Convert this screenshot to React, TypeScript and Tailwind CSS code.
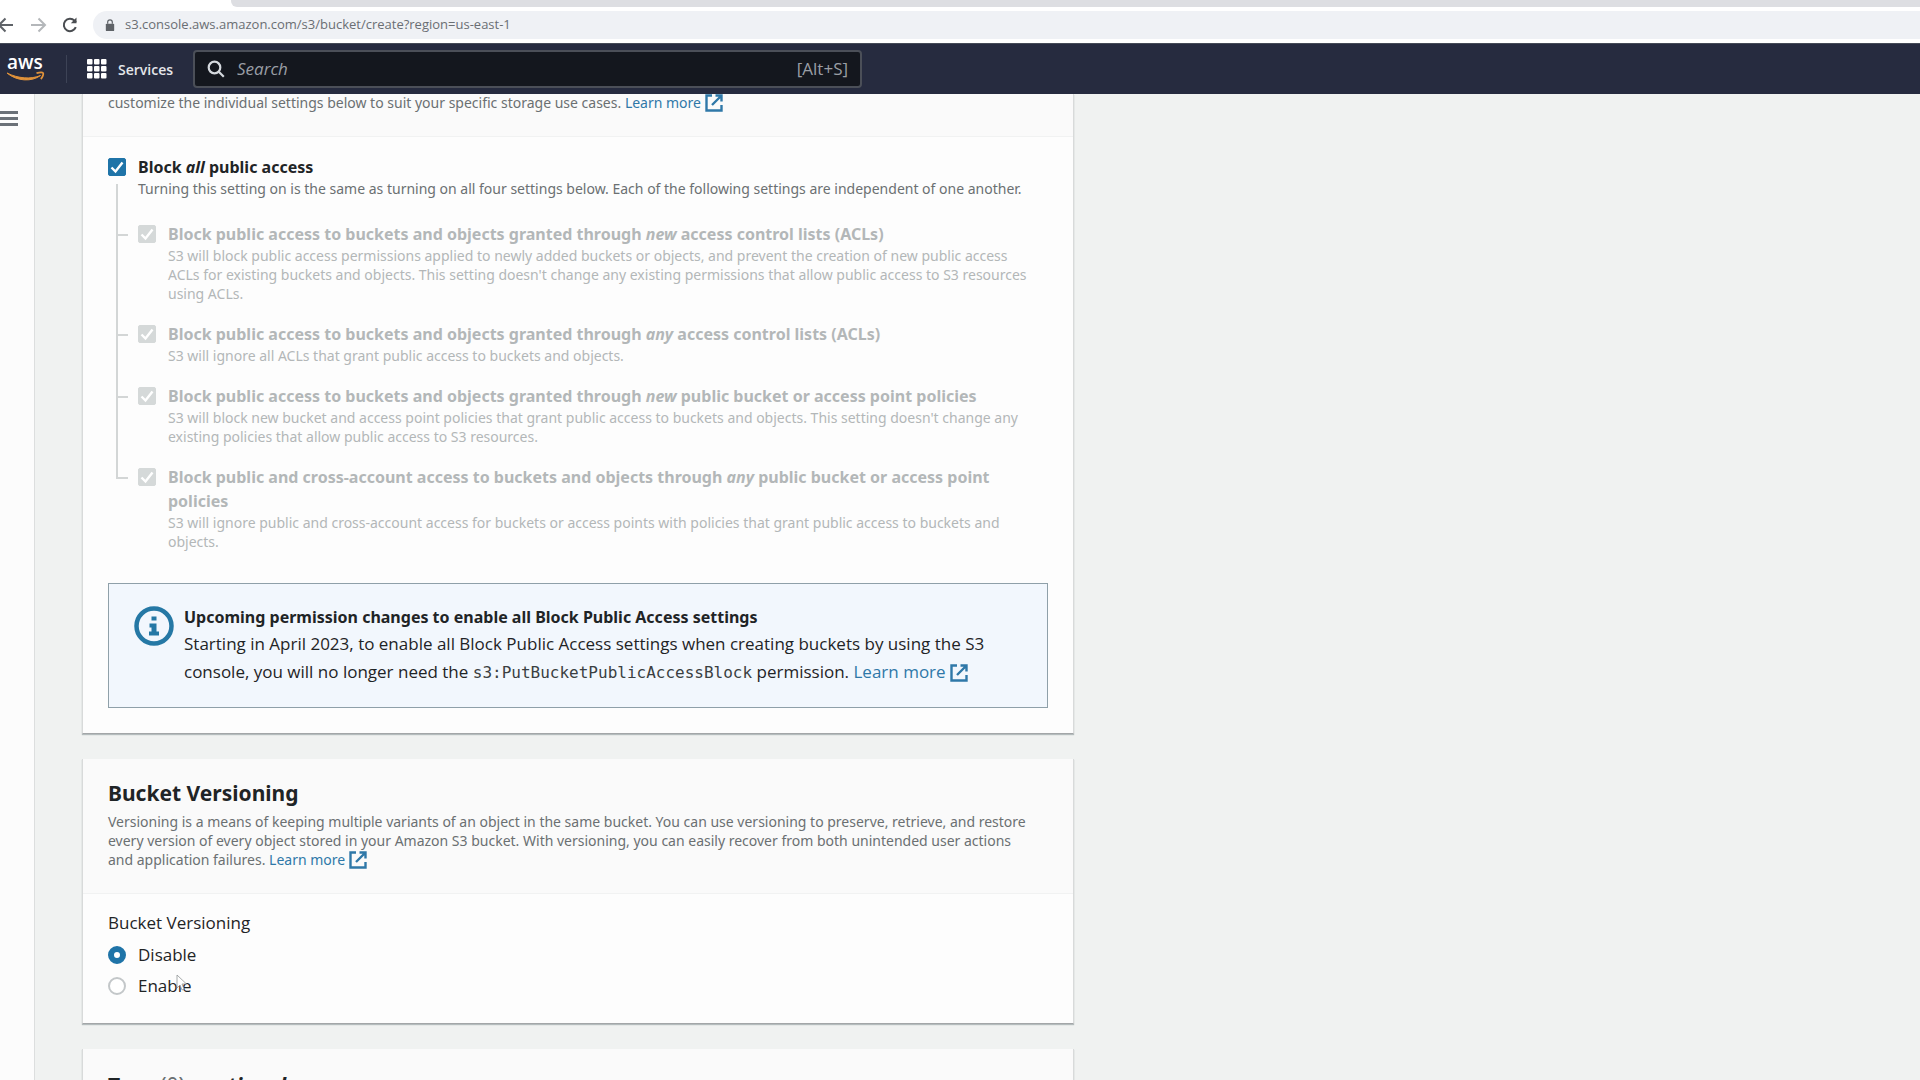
import React, { useState } from 'react';

interface AccessSetting {
  id: string;
  title: React.ReactNode;
  description: string;
}

const ACCESS_SETTINGS: AccessSetting[] = [
  {
    id: 'new-acls',
    title: <>Block public access to buckets and objects granted through <em>new</em> access control lists (ACLs)</>,
    description:
      "S3 will block public access permissions applied to newly added buckets or objects, and prevent the creation of new public access ACLs for existing buckets and objects. This setting doesn't change any existing permissions that allow public access to S3 resources using ACLs.",
  },
  {
    id: 'any-acls',
    title: <>Block public access to buckets and objects granted through <em>any</em> access control lists (ACLs)</>,
    description: 'S3 will ignore all ACLs that grant public access to buckets and objects.',
  },
  {
    id: 'new-policies',
    title: <>Block public access to buckets and objects granted through <em>new</em> public bucket or access point policies</>,
    description:
      "S3 will block new bucket and access point policies that grant public access to buckets and objects. This setting doesn't change any existing policies that allow public access to S3 resources.",
  },
  {
    id: 'any-policies',
    title: <>Block public and cross-account access to buckets and objects through <em>any</em> public bucket or access point policies</>,
    description:
      'S3 will ignore public and cross-account access for buckets or access points with policies that grant public access to buckets and objects.',
  },
];

const ExternalIcon = () => (
  <svg viewBox="0 0 18 18" className="inline-block h-[18px] w-[18px] align-[-4px]" fill="none" stroke="currentColor" strokeWidth="2.4" aria-hidden="true">
    <path d="M7 1.500H1.500v15h15V11" />
    <path d="M10.500 1.500h6v6M16 2 7 11" />
  </svg>
);

const LearnMore = () => (
  <a href="#learn-more" className="whitespace-nowrap text-[#2f78a8]">
    Learn more <ExternalIcon />
  </a>
);

const AwsLogo = () => (
  <svg viewBox="0 0 40 36" className="h-9 w-10" aria-label="aws">
    <text x="0" y="18" fill="#fff" fontSize="19" fontFamily="Open Sans, sans-serif" fontWeight="600">aws</text>
    <path d="M0 22C10 30.500 25 31 33.500 24.500 24 28.500 11 27.500 0 22Z" fill="#e0923a" stroke="#e0923a" strokeWidth="1" />
    <path d="M29.500 22.200c3-.9 6-.9 6.600-.2.600.9-.4 4.200-2.300 6" fill="none" stroke="#e0923a" strokeWidth="1.800" />
  </svg>
);

interface CheckboxProps {
  id: string;
  checked: boolean;
  disabled?: boolean;
  onChange?: () => void;
}

const Checkbox: React.FC<CheckboxProps> = ({ id, checked, disabled, onChange }) => (
  <span className="relative block h-[18px] w-[18px] shrink-0">
    <input
      id={id}
      type="checkbox"
      checked={checked}
      disabled={disabled}
      onChange={onChange}
      className="block h-[18px] w-[18px] appearance-none rounded-xs border border-[#8a9296] bg-white checked:border-[#1f74a8] checked:bg-[#1f74a8] disabled:border-[#d5d9d9] disabled:bg-[#d5d9d9]"
    />
    {checked && (
      <svg viewBox="0 0 18 18" className="pointer-events-none absolute inset-0" fill="none" stroke="#fff" strokeWidth="2.4" aria-hidden="true">
        <path d="m3.500 9.500 4 4 7-9" />
      </svg>
    )}
  </span>
);

const Card: React.FC<{ header: React.ReactNode; children?: React.ReactNode }> = ({ header, children }) => (
  <section className="border border-t-0 border-x-[#d8dada] border-b-[#a3a6a8] bg-[#fdfdfd] shadow-[0_1px_1px_0_rgba(0,28,36,0.25)]">
    <div className="border-b border-[#f1f2f2] bg-[#fafafa] px-[25px] pb-6">{header}</div>
    {children}
  </section>
);

const BrowserBar = () => (
  <div className="shrink-0 bg-white text-[#5f6368]">
    <div className="flex h-[7px] bg-white">
      <div className="w-[231px]" />
      <div className="flex-1 rounded-bl-md bg-[#dddee2]" />
    </div>
    <div className="flex h-9 items-center">
      <button aria-label="Back" className="-ml-1 w-[18px]">
        <svg viewBox="0 0 18 18" className="h-[18px] w-[18px]" fill="none" stroke="#5f6368" strokeWidth="2"><path d="M17 9H3M9.500 2.500 3 9l6.500 6.500" /></svg>
      </button>
      <button aria-label="Forward" className="ml-4 w-[18px]">
        <svg viewBox="0 0 18 18" className="h-[18px] w-[18px]" fill="none" stroke="#b4b7ba" strokeWidth="2"><path d="M1 9h13M8.500 2.500 15 9l-6.500 6.500" /></svg>
      </button>
      <button aria-label="Reload" className="ml-[13px] w-[18px]">
        <svg viewBox="0 0 18 18" className="h-[18px] w-[18px]" fill="none" stroke="#4a4d51" strokeWidth="2"><path d="M14.800 11.200A6.200 6.200 0 1 1 13.500 4.600L15 6.200" /><path d="M15.500 1.500v5.700H9.800Z" fill="#4a4d51" stroke="none" /></svg>
      </button>
      <div className="ml-[14px] flex h-7 flex-1 items-center rounded-l-full bg-[#eff1f5] pl-3">
        <svg viewBox="0 0 10 14" className="h-[13px] w-[10px]" aria-hidden="true">
          <rect x="0.500" y="5" width="9" height="8" rx="1" fill="#5f6368" />
          <path d="M2.500 5V3.500a2.500 2.500 0 0 1 5 0V5" fill="none" stroke="#5f6368" strokeWidth="1.300" />
        </svg>
        <input aria-label="Address" readOnly value="s3.console.aws.amazon.com/s3/bucket/create?region=us-east-1" className="ml-[10px] flex-1 bg-transparent font-['Open_Sans',sans-serif] text-[13px] text-[#6a6e73] outline-none" />
      </div>
    </div>
  </div>
);

const ConsoleHeader = () => (
  <header className="flex h-[51px] shrink-0 items-center border-t border-[#454b57] bg-[#262b3f] font-['Open_Sans',sans-serif] text-white">
    <a href="#home" aria-label="AWS home" className="ml-[7px]"><AwsLogo /></a>
    <div className="ml-[19px] h-7 w-px bg-[#3d4356]" />
    <button className="ml-5 flex items-center gap-[11px] text-[14px] font-semibold text-[#e4e6ea]">
      <svg viewBox="0 0 20 20" className="h-5 w-5" fill="#fff" aria-hidden="true">
        {[0, 7, 14].map(y => [0, 7, 14].map(x => <rect key={`${x}-${y}`} x={x} y={y} width="5.500" height="5.500" rx="1" />))}
      </svg>
      Services
    </button>
    <label className="ml-5 flex h-[38px] w-[669px] items-center rounded-sm border-2 border-[#4b4f58] bg-[#14171e] px-3">
      <svg viewBox="0 0 18 18" className="h-[18px] w-[18px]" fill="none" stroke="#d5d9de" strokeWidth="2.200" aria-hidden="true">
        <circle cx="7.500" cy="7.500" r="5.800" /><path d="m11.800 11.800 5 5" />
      </svg>
      <input type="search" placeholder="Search" aria-label="Search" className="ml-3 min-w-0 flex-1 bg-transparent text-[17px] outline-none placeholder:text-[#9a9ea5] placeholder:italic" />
      <span className="text-[17px] text-[#9a9ea5]">[Alt+S]</span>
    </label>
  </header>
);

const App: React.FC = () => {
  const [blockAll, setBlockAll] = useState(true);
  const [versioning, setVersioning] = useState('Disable');

  return (
    <div className="flex h-screen flex-col overflow-hidden bg-[#f0f2f1] font-['Noto_Sans',sans-serif] text-[#1f2426]">
      <BrowserBar />
      <ConsoleHeader />

      <div className="flex min-h-0 flex-1">
        <nav className="w-[35px] shrink-0 border-r border-[#dcdede] bg-[#fcfcfc]">
          <button aria-label="Open navigation" className="mt-[17px] flex w-[18px] flex-col gap-[3px]">
            <span className="h-[3px] w-full bg-[#6b7178]" />
            <span className="h-[3px] w-full bg-[#6b7178]" />
            <span className="h-[3px] w-full bg-[#6b7178]" />
          </button>
        </nav>

        <main className="ml-[47px] w-[992px]">
          <div className="flex flex-col gap-[25px]">
            {/* Block Public Access */}
            <Card
              header={
                <p className="text-[14px] leading-[18px] text-[#6b7072]">
                  customize the individual settings below to suit your specific storage use cases. <LearnMore />
                </p>
              }
            >
              <div className="px-[25px] pt-[18px] pb-[25px]">
                <div className="flex gap-3">
                  <div className="flex w-[18px] flex-col pt-[3px]">
                    <Checkbox id="block-all" checked={blockAll} onChange={() => setBlockAll(!blockAll)} />
                    <span className="mt-2 ml-2 flex-1 border-l-2 border-[#d3d6d6]" />
                  </div>
                  <div className="pb-6">
                    <label htmlFor="block-all" className="block text-[16px] leading-6 font-bold">
                      Block <em>all</em> public access
                    </label>
                    <p className="pr-[18px] text-[14px] leading-[19px] text-[#6b7072]">
                      Turning this setting on is the same as turning on all four settings below. Each of the following settings are independent of one another.
                    </p>
                  </div>
                </div>

                <ul className="ml-2">
                  {ACCESS_SETTINGS.map((setting, index) => {
                    const last = index === ACCESS_SETTINGS.length - 1;
                    return (
                      <li key={setting.id} className="flex">
                        <div className="flex w-[22px] shrink-0 flex-col">
                          <span className="h-[14px] w-3 border-b-2 border-l-2 border-[#d3d6d6]" />
                          {!last && <span className="flex-1 border-l-2 border-[#d3d6d6]" />}
                        </div>
                        <div className="pt-[3px]">
                          <Checkbox id={setting.id} checked={blockAll} disabled />
                        </div>
                        <div className={last ? 'ml-3' : 'ml-3 pb-[19px]'}>
                          <label htmlFor={setting.id} className="block text-[16px] leading-6 font-bold text-[#b3b7b8]">
                            {setting.title}
                          </label>
                          <p className="pr-[18px] text-[14px] leading-[19px] text-[#b3b7b8]">{setting.description}</p>
                        </div>
                      </li>
                    );
                  })}
                </ul>

                <div className="mt-8 flex gap-[10px] border border-[#8fa0a9] bg-[#f2f7fd] px-[25px] pt-5 pb-5">
                  <svg viewBox="0 0 40 40" className="mt-[2px] h-10 w-10 shrink-0" aria-hidden="true">
                    <circle cx="20" cy="20" r="17.500" fill="none" stroke="#2578a5" strokeWidth="4.500" />
                    <path d="M17.500 10.500h5v4h-5zM15.500 17.500h7v8h2.500v4h-10v-4h2.500v-4h-2z" fill="#2578a5" />
                  </svg>
                  <div>
                    <h3 className="text-[16px] leading-[26px] font-bold">
                      Upcoming permission changes to enable all Block Public Access settings
                    </h3>
                    <p className="font-['Open_Sans',sans-serif] text-[17px] leading-7">
                      Starting in April 2023, to enable all Block Public Access settings when creating buckets by using the S3 console, you will no longer need the{' '}
                      <code className="font-['DejaVu_Sans_Mono',monospace] text-[16px] text-[#3a3f42]">s3:PutBucketPublicAccessBlock</code> permission. <LearnMore />
                    </p>
                  </div>
                </div>
              </div>
            </Card>

            {/* Bucket Versioning */}
            <Card
              header={
                <div className="pt-5">
                  <h2 className="mb-[5px] text-[21px] leading-7 font-bold">Bucket Versioning</h2>
                  <p className="pr-[18px] text-[14px] leading-[19px] text-[#6b7072]">
                    Versioning is a means of keeping multiple variants of an object in the same bucket. You can use versioning to preserve, retrieve, and restore every version of every object stored in your Amazon S3 bucket. With versioning, you can easily recover from both unintended user actions and application failures. <LearnMore />
                  </p>
                </div>
              }
            >
              <fieldset className="px-[25px] pt-4 pb-6 font-['Open_Sans',sans-serif]">
                <legend className="float-left mb-[6px] w-full text-[17px] leading-[26px]">Bucket Versioning</legend>
                <div className="clear-both flex flex-col gap-[5px]">
                  {['Disable', 'Enable'].map(option => (
                    <label key={option} className="flex items-center gap-3 text-[17px] leading-[26px]">
                      <input
                        type="radio"
                        name="versioning"
                        value={option}
                        checked={versioning === option}
                        onChange={() => setVersioning(option)}
                        className="h-[18px] w-[18px] appearance-none rounded-full border-2 border-[#c3c7c9] bg-white checked:border-[6px] checked:border-[#1f74a8]"
                      />
                      {option}
                    </label>
                  ))}
                </div>
              </fieldset>
            </Card>

            {/* Tags */}
            <Card
              header={
                <div className="pt-[22px]">
                  <h2 className="text-[21px] leading-7 font-bold">
                    Tags <span className="font-normal text-[#6b7072]">(0)</span> - <em>optional</em>
                  </h2>
                </div>
              }
            />
          </div>
        </main>
      </div>

      {/* Pointer */}
      <svg viewBox="0 0 12 18" className="pointer-events-none absolute top-[974px] left-[176px] h-[18px] w-3" aria-hidden="true">
        <path d="M1 1v13l3-3 2 5 2-1-2-5h4.500Z" fill="#fff" stroke="#8f9496" strokeWidth="0.800" />
      </svg>
    </div>
  );
};

export default App;
